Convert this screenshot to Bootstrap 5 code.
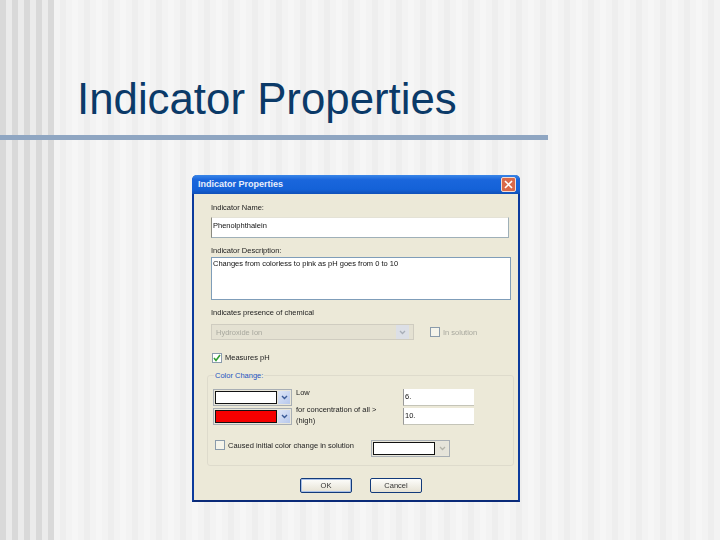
<!DOCTYPE html>
<html lang="en">
<head>
<meta charset="utf-8">
<title>Indicator Properties</title>
<link rel="stylesheet" href="https://cdn.jsdelivr.net/npm/bootstrap@5.3.0/dist/css/bootstrap.min.css">
<style>
html,body{margin:0;width:720px;height:540px;overflow:hidden}
body{font-family:"Liberation Sans",Arial,sans-serif;
 background:
 repeating-linear-gradient(90deg,#d9d9d9 0 6px,#ebebeb 6px 12px) 0 0/54px 100% no-repeat,
 repeating-linear-gradient(90deg,#f6f6f6 0 6px,#f3f3f3 6px 12px,#eeeeee 12px 18px,#f3f3f3 18px 24px);}
.slide-title{font-size:43.8px;line-height:46px;color:#0b3a68;padding:76px 0 0 77px;margin:0;font-weight:400;height:135px}
.slide-rule{width:548px;height:5px;background:#8fa6c2}
.xp-win{width:328px;height:327px;margin:35px 0 0 192px;background:#ece9d8;border:2px solid #0b3a9c;border-bottom-color:#0a2a78;border-top:0;border-radius:5px 5px 0 0;color:#222;font-size:7.5px;line-height:11px;filter:blur(.3px)}
.xp-bar{height:19px;margin:0 -2px;background:linear-gradient(#3a86e8,#1a66dc 25%,#1462d8 75%,#0f50b8);border-radius:5px 5px 0 0;color:#e8eefc;font-weight:700;font-size:9px;padding:0 4px 0 6px}
.xp-close{width:15px;height:15px;background:#d9694a;border:1px solid #f4ddd4;border-radius:2px}
.xp-close svg{display:block}
.xp-body{padding:8px 8px 0 17px}
.xp-label{height:11px}
.xp-gap{margin-top:7px}
.xp-field{background:#fff;border:1px solid #9fb0b8;border-top-color:#e4e2d6;border-left-color:#8a8a80;padding:2px 2px 2px 1px;color:#111;border-radius:0}
.xp-name{width:298px;height:21px;margin-top:4px;padding-top:2px}
.xp-desc{width:300px;height:43px;margin-top:1px;border-color:#7f9db9;padding:0 2px 1px 1px}
.xp-select-row{margin-top:6px}
.xp-select{width:203px;height:16px;background:#e4e1d2;border:1px solid #cfccc0;color:#a8a89e;padding:0 4px}
.xp-arrow{width:13px;height:100%;margin-left:auto;background:#dcdfe6}
.xp-box{width:10px;height:10px;border:1px solid #8a9bab;background:#f5f4ea;flex:none}
.xp-box.xp-on{background:#fff}
.xp-box-off{margin-left:16px}
.xp-muted{margin-left:3px;color:#a8a89e}
.xp-measure{margin:12px 0 0 1px;gap:3px}
.xp-group{width:307px;height:91px;margin:12px 0 0 -4px;border:1px solid #dedbcc;border-radius:3px;padding:13px 5px 0 5px;position:relative}
.xp-legend{position:absolute;left:6px;top:-6px;background:#ece9d8;color:#2452c0;padding:0 1px}
.xp-stack{gap:2px}
.xp-combo{width:79px;height:17px;background:#e8e6da;border:1px solid #a8aeb4;padding:1px}
.xp-swatch{flex:1;border:1px solid #111;background:#fff;height:13px}
.xp-swatch.xp-red{background:#f60000}
.xp-drop{width:12px;height:13px;background:linear-gradient(135deg,#dfe7f7,#b7c8ec);margin-left:1px}
.xp-drop.xp-off{background:#e6e4da}
.xp-num{width:71px;height:17px;background:#fff;padding:2px 1px;color:#111;border-bottom:1px solid #c4c4b8;border-left:1px solid #999}
.xp-btn{width:52px;height:15px;background:linear-gradient(#fdfdfb,#e6e2d4);border:1px solid #123a7a;border-radius:2px;color:#333;font-size:7.5px;line-height:12px;padding:0}
.xp-btn.xp-def{box-shadow:inset 0 0 0 1px #a8c0e8}
.xp-btn-row{gap:18px;margin:12px 0 0 89px}
.w-lab{width:107px;margin-left:4px}
.xp-low{height:17px;margin-top:-2px}
.xp-caused{margin:14px 0 0 2px}
.xp-caused-text{margin-left:3px;width:143px}
.xp-drop svg,.xp-arrow svg{display:block}
</style>
</head>
<body>
<h1 class="slide-title">Indicator Properties</h1>
<div class="slide-rule"></div>
<div class="xp-win d-flex flex-column">
  <div class="xp-bar d-flex align-items-center justify-content-between">
    <span>Indicator Properties</span>
    <span class="xp-close d-flex"><svg width="13" height="13" viewBox="0 0 13 13"><path d="M3 3l7 7M10 3l-7 7" stroke="#fff" stroke-width="1.6"/></svg></span>
  </div>
  <div class="xp-body">
    <div class="xp-label">Indicator Name:</div>
    <div class="xp-field xp-name">Phenolphthalein</div>
    <div class="xp-label xp-gap">Indicator Description:</div>
    <div class="xp-field xp-desc">Changes from colorless to pink as pH goes from 0 to 10</div>
    <div class="xp-label xp-gap">Indicates presence of chemical</div>
    <div class="d-flex align-items-center xp-select-row">
      <div class="xp-select d-flex align-items-center">Hydroxide Ion<span class="xp-arrow d-flex align-items-center justify-content-center"><svg width="7" height="5" viewBox="0 0 7 5"><path d="M1 1l2.5 2.5L6 1" fill="none" stroke="#a8aeb8" stroke-width="1.3"/></svg></span></div>
      <span class="xp-box xp-box-off"></span><span class="xp-muted">In solution</span>
    </div>
    <div class="d-flex align-items-center xp-measure">
      <span class="xp-box xp-on d-flex align-items-center justify-content-center"><svg width="8" height="8" viewBox="0 0 8 8"><path d="M1 4l2 2.5L7 1" fill="none" stroke="#2f9e2f" stroke-width="1.6"/></svg></span>
      <span>Measures pH</span>
    </div>
    <div class="xp-group">
      <span class="xp-legend">Color Change:</span>
      <div class="d-flex">
        <div class="d-flex flex-column xp-stack">
          <div class="xp-combo d-flex"><span class="xp-swatch"></span><span class="xp-drop d-flex align-items-center justify-content-center"><svg width="7" height="5" viewBox="0 0 7 5"><path d="M1 1l2.5 2.5L6 1" fill="none" stroke="#3a5a96" stroke-width="1.4"/></svg></span></div>
          <div class="xp-combo d-flex"><span class="xp-swatch xp-red"></span><span class="xp-drop d-flex align-items-center justify-content-center"><svg width="7" height="5" viewBox="0 0 7 5"><path d="M1 1l2.5 2.5L6 1" fill="none" stroke="#3a5a96" stroke-width="1.4"/></svg></span></div>
        </div>
        <div class="w-lab">
          <div class="xp-low">Low</div>
          <div>for concentration of all &gt;</div>
          <div>(high)</div>
        </div>
        <div class="d-flex flex-column xp-stack">
          <div class="xp-num">6.</div>
          <div class="xp-num">10.</div>
        </div>
      </div>
      <div class="d-flex align-items-start xp-caused">
        <span class="xp-box"></span>
        <span class="xp-caused-text">Caused initial color change in solution</span>
        <div class="xp-combo d-flex"><span class="xp-swatch"></span><span class="xp-drop xp-off d-flex align-items-center justify-content-center"><svg width="7" height="5" viewBox="0 0 7 5"><path d="M1 1l2.5 2.5L6 1" fill="none" stroke="#b4b4aa" stroke-width="1.3"/></svg></span></div>
      </div>
    </div>
    <div class="d-flex xp-btn-row">
      <button type="button" class="btn xp-btn xp-def">OK</button>
      <button type="button" class="btn xp-btn">Cancel</button>
    </div>
  </div>
</div>
</body>
</html>
